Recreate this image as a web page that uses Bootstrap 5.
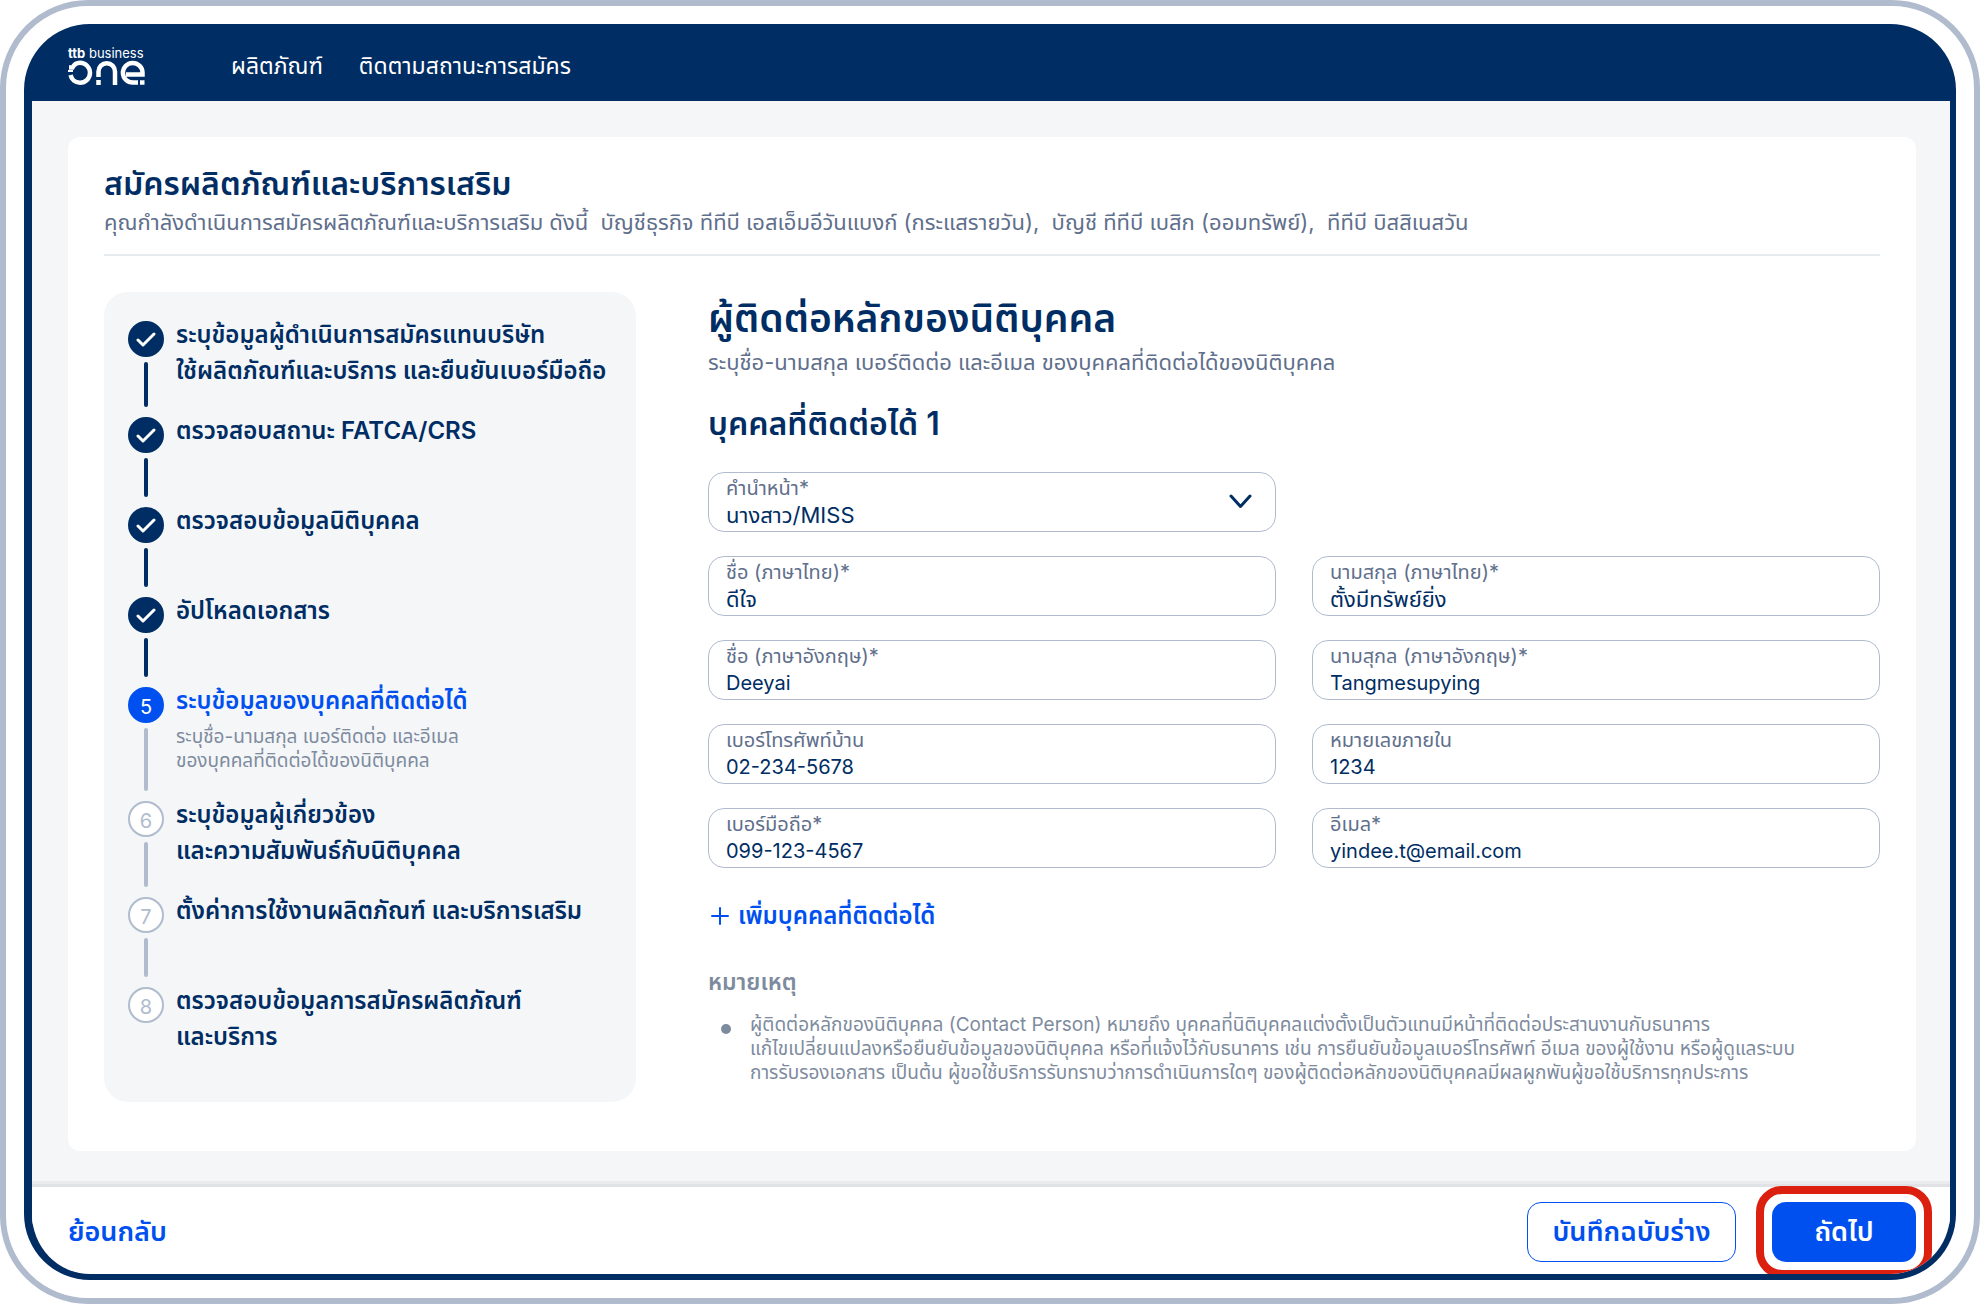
<!DOCTYPE html>
<html lang="th">
<head>
<meta charset="utf-8">
<meta name="viewport" content="width=device-width, initial-scale=1">
<title>ttb business one</title>
<link href="https://cdn.jsdelivr.net/npm/bootstrap@5.3.0/dist/css/bootstrap.min.css" rel="stylesheet">
<style>
  :root { --navy: #002d63; --blue: #0050f0; --slate: #5f6f8c; --mist: #b0bccd; --ash: #7e8b9e; --fog: #f4f6f8; }
  body { font-family: Inter, "Noto Sans Thai", "Noto Sans", sans-serif; color: var(--navy); background: #fff; }
  .device { min-height: 100vh; padding: 18px; border: 6px solid var(--mist); border-radius: 88px; }
  .screen { border: 6px solid var(--navy); border-left-width: 8px; border-radius: 66px; overflow: hidden; background: var(--navy); }
  .topbar { height: 71px; padding: 0 36px; }
  .brand-name { font-size: 13px; line-height: 14px; }
  .topbar .nav-link { font-size: 23px; line-height: 36px; color: #fff; padding: 0; }
  .topbar .navbar-nav { gap: 36px; margin-left: 86px; }
  .workspace { background: var(--fog); padding: 36px 34px 36px 36px; }
  .sheet { background: #fff; border-radius: 12px; padding: 27px 36px 49px; }
  .page-title { font-size: 32px; line-height: 40px; font-weight: 600; margin: 0; }
  .subtext { font-size: 22px; line-height: 36px; color: var(--slate); margin: 0; }
  .sheet-head { border-bottom: 2px solid #e6ebef; padding-bottom: 14px; margin-bottom: 36px; }
  .columns { gap: 72px; }
  .steps { flex: 0 0 532px; background: var(--fog); border-radius: 24px; padding: 25px 24px 47px; list-style: none; margin: 0; }
  .step { gap: 12px; }
  .step-body { min-height: 90px; padding-bottom: 24px; }
  .step:last-child .step-body { min-height: 0; padding-bottom: 0; }
  .step-title { font-size: 24px; line-height: 36px; font-weight: 600; }
  .step-note { font-size: 19px; line-height: 24px; color: var(--ash); margin-top: 6px; }
  .marker { padding-top: 4px; }
  .dot { width: 36px; height: 36px; border-radius: 50%; border: 2px solid var(--mist); background: #fff; color: var(--mist); font-size: 20px; line-height: 36px; }
  .rail { width: 4px; border-radius: 2px; margin: 5px 0 6px; background: var(--mist); }
  .done .dot, .done .rail { background: var(--navy); border-color: var(--navy); }
  .current .dot { background: var(--blue); border-color: var(--blue); color: #fff; }
  .current .step-title { color: var(--blue); }
  .form-title { font-size: 39px; line-height: 52px; font-weight: 600; margin: 0; }
  .person-title { font-size: 32px; line-height: 40px; font-weight: 600; margin: 24px 0 28px; }
  .fields { --bs-gutter-x: 36px; --bs-gutter-y: 24px; }
  .field { height: 60px; border: 1px solid var(--mist); border-radius: 16px; padding: 3px 17px; }
  .field label { display: block; font-size: 20px; line-height: 24px; color: var(--slate); }
  .field .form-control, .field .form-select { display: block; height: 30px; padding: 0; border: 0; border-radius: 0; background-color: transparent; font-size: 20px; line-height: 30px; color: var(--navy); }
  .field .form-select, .field .form-control:lang(th) { font-size: 22px; }
  .field .form-control:lang(en) { font-size: 20px; }
  .field .form-select { background-image: none; }
  .field .chevron { position: absolute; right: 23px; top: 21px; pointer-events: none; }
  .add-link { font-size: 24px; line-height: 36px; font-weight: 600; color: var(--blue); gap: 9px; padding: 0; border: 0; margin: 30px 0 30px 3px; }
  .remark-title { font-size: 23px; line-height: 36px; font-weight: 600; color: var(--ash); margin: 0 0 13px; }
  .remark { font-size: 19px; line-height: 24px; color: var(--ash); padding-left: 13px; list-style: none; margin: 0; }
  .remark li { gap: 19px; }
  .remark-dot { width: 10px; height: 10px; border-radius: 50%; background: var(--ash); margin-top: 11px; }
  .actions { background: #fff; padding: 15px 34px 12px 36px; box-shadow: 0 -3px 0 #e0e2e5, 0 -6px 0 #e9ebed; position: relative; }
  .actions .btn { font-size: 27px; line-height: 36px; font-weight: 600; height: 60px; border-radius: 14px; }
  .actions .btn-link { color: var(--blue); padding: 0; border: 0; }
  .action-pair { gap: 36px; }
  .btn-draft { color: var(--blue); border: 1px solid var(--blue); background: #fff; min-width: 209px; }
  .btn-next { color: #fff; background: var(--blue); border: 0; min-width: 144px; position: relative; }
  .btn-next::after { content: ""; position: absolute; inset: -16px; border: 8px solid #dc2010; border-radius: 26px; pointer-events: none; }
</style>
</head>
<body>
<div class="device d-flex flex-column">
  <div class="screen d-flex flex-column flex-grow-1">
    <header class="topbar d-flex align-items-center">
      <a href="#" class="text-white text-decoration-none d-flex flex-column" aria-label="ttb business one">
        <span class="brand-name"><b>ttb</b> business</span>
        <svg width="77" height="26" viewBox="0 0 77 26" fill="none" stroke="#fff" stroke-width="4.500" aria-hidden="true">
          <path d="M1 7.500H4.500A8.500 8.500 0 0 1 12 2.800A9.800 9.800 0 0 1 12 22.800A9.600 9.600 0 0 1 2.600 15"/>
          <path d="M0 11H5" stroke-width="2"/>
          <path d="M30.500 17V11.500A8.200 8.200 0 0 1 47 11.500V25M30.500 20V25"/>
          <path d="M70 22.500H65A9.800 9.800 0 1 1 74.500 12.500V14.500H58"/>
          <path d="M72 22.500H76.500"/>
        </svg>
      </a>
      <nav class="navbar-nav flex-row">
        <a class="nav-link" href="#">ผลิตภัณฑ์</a>
        <a class="nav-link" href="#">ติดตามสถานะการสมัคร</a>
      </nav>
    </header>

    <main class="workspace flex-grow-1">
      <div class="sheet">
        <div class="sheet-head">
          <h1 class="page-title">สมัครผลิตภัณฑ์และบริการเสริม</h1>
          <p class="subtext">คุณกำลังดำเนินการสมัครผลิตภัณฑ์และบริการเสริม ดังนี้ &nbsp;บัญชีธุรกิจ ทีทีบี เอสเอ็มอีวันแบงก์ (กระแสรายวัน), &nbsp;บัญชี ทีทีบี เบสิก (ออมทรัพย์), &nbsp;ทีทีบี บิสสิเนสวัน</p>
        </div>
        <div class="columns d-flex">
          <ol class="steps">
            <li class="step done d-flex">
              <div class="marker d-flex flex-column align-items-center">
                <span class="dot d-flex align-items-center justify-content-center flex-shrink-0"><svg width="20" height="15" viewBox="0 0 20 15" fill="none" stroke="#fff" stroke-width="3" stroke-linecap="round" stroke-linejoin="round"><path d="M2 8l5 5L18 2"/></svg></span>
                <span class="rail flex-grow-1"></span>
              </div>
              <div class="step-body step-title">ระบุข้อมูลผู้ดำเนินการสมัครแทนบริษัท<br>ใช้ผลิตภัณฑ์และบริการ และยืนยันเบอร์มือถือ</div>
            </li>
            <li class="step done d-flex">
              <div class="marker d-flex flex-column align-items-center">
                <span class="dot d-flex align-items-center justify-content-center flex-shrink-0"><svg width="20" height="15" viewBox="0 0 20 15" fill="none" stroke="#fff" stroke-width="3" stroke-linecap="round" stroke-linejoin="round"><path d="M2 8l5 5L18 2"/></svg></span>
                <span class="rail flex-grow-1"></span>
              </div>
              <div class="step-body step-title">ตรวจสอบสถานะ FATCA/CRS</div>
            </li>
            <li class="step done d-flex">
              <div class="marker d-flex flex-column align-items-center">
                <span class="dot d-flex align-items-center justify-content-center flex-shrink-0"><svg width="20" height="15" viewBox="0 0 20 15" fill="none" stroke="#fff" stroke-width="3" stroke-linecap="round" stroke-linejoin="round"><path d="M2 8l5 5L18 2"/></svg></span>
                <span class="rail flex-grow-1"></span>
              </div>
              <div class="step-body step-title">ตรวจสอบข้อมูลนิติบุคคล</div>
            </li>
            <li class="step done d-flex">
              <div class="marker d-flex flex-column align-items-center">
                <span class="dot d-flex align-items-center justify-content-center flex-shrink-0"><svg width="20" height="15" viewBox="0 0 20 15" fill="none" stroke="#fff" stroke-width="3" stroke-linecap="round" stroke-linejoin="round"><path d="M2 8l5 5L18 2"/></svg></span>
                <span class="rail flex-grow-1"></span>
              </div>
              <div class="step-body step-title">อัปโหลดเอกสาร</div>
            </li>
            <li class="step current d-flex" aria-current="step">
              <div class="marker d-flex flex-column align-items-center">
                <span class="dot text-center flex-shrink-0">5</span>
                <span class="rail flex-grow-1"></span>
              </div>
              <div class="step-body">
                <div class="step-title">ระบุข้อมูลของบุคคลที่ติดต่อได้</div>
                <div class="step-note">ระบุชื่อ-นามสกุล เบอร์ติดต่อ และอีเมล<br>ของบุคคลที่ติดต่อได้ของนิติบุคคล</div>
              </div>
            </li>
            <li class="step d-flex">
              <div class="marker d-flex flex-column align-items-center">
                <span class="dot text-center flex-shrink-0">6</span>
                <span class="rail flex-grow-1"></span>
              </div>
              <div class="step-body step-title">ระบุข้อมูลผู้เกี่ยวข้อง<br>และความสัมพันธ์กับนิติบุคคล</div>
            </li>
            <li class="step d-flex">
              <div class="marker d-flex flex-column align-items-center">
                <span class="dot text-center flex-shrink-0">7</span>
                <span class="rail flex-grow-1"></span>
              </div>
              <div class="step-body step-title">ตั้งค่าการใช้งานผลิตภัณฑ์ และบริการเสริม</div>
            </li>
            <li class="step d-flex">
              <div class="marker d-flex flex-column align-items-center">
                <span class="dot text-center flex-shrink-0">8</span>
              </div>
              <div class="step-body step-title">ตรวจสอบข้อมูลการสมัครผลิตภัณฑ์<br>และบริการ</div>
            </li>
          </ol>

          <form class="flex-grow-1">
            <h2 class="form-title">ผู้ติดต่อหลักของนิติบุคคล</h2>
            <p class="subtext">ระบุชื่อ-นามสกุล เบอร์ติดต่อ และอีเมล ของบุคคลที่ติดต่อได้ของนิติบุคคล</p>
            <h3 class="person-title">บุคคลที่ติดต่อได้ 1</h3>
            <div class="row row-cols-2 fields">
              <div class="col">
                <div class="field position-relative">
                  <label for="prefix">คำนำหน้า*</label>
                  <select class="form-select" id="prefix"><option>นางสาว/MISS</option></select>
                  <svg class="chevron" width="23" height="15" viewBox="0 0 23 15" fill="none" stroke="#002d63" stroke-width="3" stroke-linecap="round" stroke-linejoin="round" aria-hidden="true"><path d="M2 2l9.500 10.500L21 2"/></svg>
                </div>
              </div>
              <div class="col"></div>
              <div class="col"><div class="field"><label for="first-th">ชื่อ (ภาษาไทย)*</label><input class="form-control" id="first-th" type="text" value="ดีใจ"></div></div>
              <div class="col"><div class="field"><label for="last-th">นามสกุล (ภาษาไทย)*</label><input class="form-control" id="last-th" type="text" value="ตั้งมีทรัพย์ยิ่ง"></div></div>
              <div class="col"><div class="field"><label for="first-en">ชื่อ (ภาษาอังกฤษ)*</label><input class="form-control" id="first-en" lang="en" type="text" value="Deeyai"></div></div>
              <div class="col"><div class="field"><label for="last-en">นามสุกล (ภาษาอังกฤษ)*</label><input class="form-control" id="last-en" lang="en" type="text" value="Tangmesupying"></div></div>
              <div class="col"><div class="field"><label for="home">เบอร์โทรศัพท์บ้าน</label><input class="form-control" id="home" lang="en" type="tel" value="02-234-5678"></div></div>
              <div class="col"><div class="field"><label for="ext">หมายเลขภายใน</label><input class="form-control" id="ext" lang="en" type="text" value="1234"></div></div>
              <div class="col"><div class="field"><label for="mobile">เบอร์มือถือ*</label><input class="form-control" id="mobile" lang="en" type="tel" value="099-123-4567"></div></div>
              <div class="col"><div class="field"><label for="email">อีเมล*</label><input class="form-control" id="email" lang="en" type="email" value="yindee.t@email.com"></div></div>
            </div>
            <button type="button" class="btn add-link d-flex align-items-center">
              <svg width="18" height="18" viewBox="0 0 18 18" fill="none" stroke="#0050f0" stroke-width="2" stroke-linecap="round" aria-hidden="true"><path d="M9 1v16M1 9h16"/></svg>
              เพิ่มบุคคลที่ติดต่อได้
            </button>
            <h4 class="remark-title">หมายเหตุ</h4>
            <ul class="remark">
              <li class="d-flex">
                <span class="remark-dot flex-shrink-0"></span>
                <span>ผู้ติดต่อหลักของนิติบุคคล (Contact Person) หมายถึง บุคคลที่นิติบุคคลแต่งตั้งเป็นตัวแทนมีหน้าที่ติดต่อประสานงานกับธนาคาร<br>แก้ไขเปลี่ยนแปลงหรือยืนยันข้อมูลของนิติบุคคล หรือที่แจ้งไว้กับธนาคาร เช่น การยืนยันข้อมูลเบอร์โทรศัพท์ อีเมล ของผู้ใช้งาน หรือผู้ดูแลระบบ<br>การรับรองเอกสาร เป็นต้น ผู้ขอใช้บริการรับทราบว่าการดำเนินการใดๆ ของผู้ติดต่อหลักของนิติบุคคลมีผลผูกพันผู้ขอใช้บริการทุกประการ</span>
              </li>
            </ul>
          </form>
        </div>
      </div>
    </main>

    <footer class="actions d-flex align-items-center">
      <button type="button" class="btn btn-link text-decoration-none me-auto">ย้อนกลับ</button>
      <div class="action-pair d-flex">
        <button type="button" class="btn btn-draft">บันทึกฉบับร่าง</button>
        <button type="button" class="btn btn-next">ถัดไป</button>
      </div>
    </footer>
  </div>
</div>
<script src="https://cdn.jsdelivr.net/npm/bootstrap@5.3.0/dist/js/bootstrap.bundle.min.js"></script>
</body>
</html>
